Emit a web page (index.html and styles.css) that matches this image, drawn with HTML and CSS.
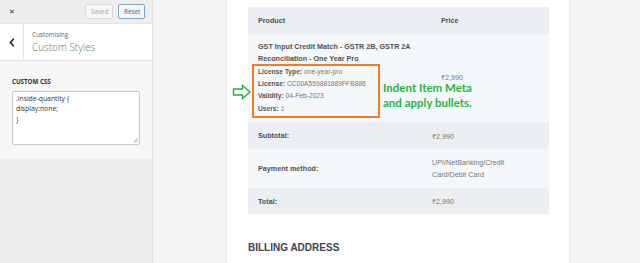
FILE: index.html
```html
<!DOCTYPE html>
<html>
<head>
<meta charset="utf-8">
<link rel="stylesheet" href="styles.css">
</head>
<body>
<aside class="sidebar">
  <div class="topbar">
    <span class="close">✕</span>
    <span class="spacer"></span>
    <button class="btn btn-saved">Saved</button>
    <button class="btn btn-reset">Reset</button>
  </div>
  <div class="panel-head">
    <div class="back"><svg width="6" height="9" viewBox="0 0 6 9"><path d="M4.8 0.8 L1.4 4.5 L4.8 8.2" fill="none" stroke="#222" stroke-width="1.6"/></svg></div>
    <div class="titles">
      <div class="crumb">Customising</div>
      <div class="title">Custom Styles</div>
    </div>
  </div>
  <div class="section">
    <div class="label">CUSTOM CSS</div>
    <div class="textarea">
      <div>.inside-quantity {</div>
      <div>display:none;</div>
      <div>}</div>
      <svg class="grip" width="5" height="5" viewBox="0 0 5 5"><path d="M4.5 0.5 L0.5 4.5 M4.5 2.5 L2.5 4.5" stroke="#888" stroke-width="0.8"/></svg>
    </div>
  </div>
</aside>
<main class="main">
  <div class="card">
    <table class="order">
      <colgroup><col class="c1"><col class="c2"></colgroup>
      <thead>
        <tr class="row-dark h27"><th>Product</th><th class="price-h">Price</th></tr>
      </thead>
      <tbody>
        <tr class="row-light">
          <td class="prod">
            <div class="prod-name">GST Input Credit Match - GSTR 2B, GSTR 2A Reconciliation - One Year Pro</div>
            <div class="meta">
              <div><b>License Type:</b> one-year-pro</div>
              <div><b>License:</b> CC00A559881889FFB886</div>
              <div><b>Validity:</b> 04-Feb-2023</div>
              <div><b>Users:</b> 1</div>
            </div>
          </td>
          <td class="val price-p">₹2,990</td>
        </tr>
      </tbody>
      <tfoot>
        <tr class="row-dark h27"><th>Subtotal:</th><td class="val">₹2,990</td></tr>
        <tr class="row-light h39"><th>Payment method:</th><td class="val pm">UPI/NetBanking/Credit Card/Debit Card</td></tr>
        <tr class="row-dark h26"><th>Total:</th><td class="val">₹2,990</td></tr>
      </tfoot>
    </table>
    <h2 class="billing">BILLING ADDRESS</h2>

    <svg class="arrow" width="20" height="16" viewBox="0 0 20 16"><path d="M1.5 5 H10.5 V1.5 L18 8 L10.5 14.5 V11 H1.5 Z" fill="none" stroke="#2eaa46" stroke-width="1.4" stroke-linejoin="miter"/></svg>
    <div class="note">Indent Item Meta<br>and apply bullets.</div>
  </div>
</main>
</body>
</html>
```

FILE: styles.css
```css
* { box-sizing: border-box; }
html, body { margin: 0; padding: 0; }
body {
  width: 640px;
  height: 263px;
  overflow: hidden;
  display: flex;
  font-family: "Liberation Sans", Arial, sans-serif;
  background: #f5f5f5;
}

/* Sidebar */
.sidebar {
  width: 153px;
  flex: 0 0 153px;
  background: #eeeeee;
  border-right: 1px solid #e0e0e0;
  display: flex;
  flex-direction: column;
  font-family: "Open Sans", "Noto Sans", sans-serif;
}
.topbar {
  height: 23px;
  display: flex;
  align-items: center;
  padding-right: 7px;
}
.close {
  width: 24px;
  text-align: center;
  font-size: 7px;
  font-weight: bold;
  color: #333;
  font-family: "DejaVu Sans", sans-serif;
}
.spacer { flex: 1; }
.btn {
  font-family: "Open Sans", "Noto Sans", sans-serif;
  font-size: 6.3px;
  height: 15px;
  padding: 0 5px;
  border-radius: 2px;
  margin-left: 5px;
  line-height: 13px;
}
.btn-saved {
  width: 28px;
  color: #a7aaad;
  background: #f6f7f7;
  border: 1px solid #dcdcde;
}
.btn-reset {
  width: 27px;
  color: #2271b1;
  background: #f6f7f7;
  border: 1px solid #7aa5cf;
}
.panel-head {
  height: 38px;
  background: #ffffff;
  border-top: 1px solid #e4e4e4;
  border-bottom: 1px solid #dddddd;
  display: flex;
}
.back {
  width: 24px;
  border-right: 1px solid #e4e4e4;
  display: flex;
  align-items: center;
  justify-content: center;
}
.titles {
  padding: 7px 0 0 8px;
}
.crumb {
  font-size: 6.3px;
  color: #646970;
  line-height: 8px;
}
.title {
  font-size: 10px;
  font-weight: 300;
  color: #6b6f74;
  line-height: 14px;
  margin-top: 1px;
}
.section {
  background: #f7f7f7;
  padding: 16px 12px 14px;
  height: 98px;
}
.label {
  font-size: 6.2px;
  font-weight: 700;
  color: #2c3338;
  line-height: 9px;
}
.textarea {
  position: relative;
  margin-top: 5px;
  width: 128px;
  height: 54px;
  background: #fff;
  border: 1px solid #c8c8c8;
  border-radius: 2px;
  padding: 2px 3px;
  font-size: 6.8px;
  line-height: 10.3px;
  color: #2c3338;
}
.grip { position: absolute; right: 1px; bottom: 1px; }

/* Main */
.main {
  flex: 1;
  padding-left: 74px;
}
.card {
  position: relative;
  width: 342px;
  height: 263px;
  background: #fff;
  box-shadow: 0 0 2px rgba(0,0,0,0.14);
  padding: 7px 0 0 21px;
}
.order {
  width: 301px;
  border-collapse: collapse;
  table-layout: fixed;
  font-size: 7.2px;
  color: #636363;
}
.c1 { width: 174px; }
.c2 { width: 127px; }
.order th, .order td {
  padding: 0 10px;
  text-align: left;
  vertical-align: middle;
}
.order th { font-weight: bold; color: #515151; }
.row-dark { background: #ebeff4; }
.row-light { background: #f5f8fb; }
.h27 th, .h27 td { height: 27px; }
.h39 th, .h39 td { height: 39px; }
.h26 th, .h26 td { height: 26px; }
.price-h { padding-left: 19px !important; }
.val { color: #777; }
.price-p { padding-left: 19px !important; padding-bottom: 2px !important; }
.pm { line-height: 12px; }
.prod {
  vertical-align: top !important;
  height: 88px;
  padding-top: 7px !important;
}
.prod-name {
  font-weight: bold;
  color: #515151;
  line-height: 12px;
}
.meta {
  margin: -1px 0 0 -6px;
  width: 128px;
  border: 2px solid #f27b23;
  padding: 0 4px 1px;
  font-size: 6.7px;
  line-height: 12.2px;
  color: #777;
}
.meta b { color: #555; }
.billing {
  margin: 28px 0 0;
  font-size: 10px;
  line-height: 12px;
  font-weight: bold;
  color: #3d4453;
}
.arrow {
  position: absolute;
  left: 5px;
  top: 84px;
}
.note {
  position: absolute;
  left: 156px;
  top: 80px;
  font-family: Lato, "Open Sans", sans-serif;
  font-weight: 700;
  font-size: 11.5px;
  line-height: 15px;
  color: #27b440;
}
```
